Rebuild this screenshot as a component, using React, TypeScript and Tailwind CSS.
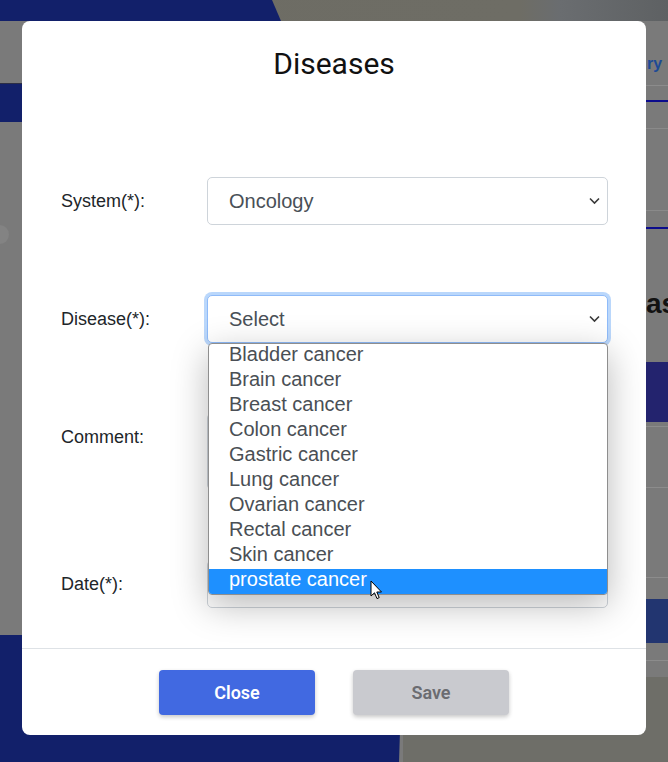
const diseases = [
  'Bladder cancer',
  'Brain cancer',
  'Breast cancer',
  'Colon cancer',
  'Gastric cancer',
  'Lung cancer',
  'Ovarian cancer',
  'Rectal cancer',
  'Skin cancer',
  'prostate cancer',
];

const Chevron = () => (
  <svg width="11" height="7" viewBox="0 0 11 7" className="absolute right-[7px] top-1/2 -translate-y-1/2">
    <path d="M1 1l4.5 4.5L10 1" fill="none" stroke="#3a3a3a" strokeWidth="1.6" />
  </svg>
);

const Cursor = () => (
  <svg width="14" height="21" viewBox="0 0 14 21" className="absolute left-[370px] top-[580px] z-30">
    <path
      d="M1 1 L1 16 L4.5 12.8 L7 18.6 L9.2 17.6 L6.8 12 L11.5 12 Z"
      fill="#fff"
      stroke="#000"
      strokeWidth="1"
      strokeLinejoin="round"
    />
  </svg>
);

const Background = () => (
  <div className="flex h-full flex-col">
    <div className="flex h-[21px] bg-[linear-gradient(90deg,#6d6c64_0,#6e6d65_520px,#6a6d70_560px,#5e6163_668px)]">
      <div className="w-[281px] bg-[#12206a] [clip-path:polygon(0_0,272px_0,281px_100%,0_100%)]" />
    </div>
    <div className="flex flex-1">
      {/* left strip */}
      <div className="flex w-[22px] flex-col">
        <div className="h-[62px] bg-[#7a7a7a]" />
        <div className="h-[1px] bg-[#2c2e45]" />
        <div className="h-[38px] bg-[#12206a]" />
        <div className="flex-1 bg-[#7a7a7a] pt-[103px]">
          <div className="ml-[-10px] h-[19px] w-[19px] rounded-full bg-[#838383]" />
        </div>
        <div className="h-[127px] bg-[#12206a]" />
      </div>
      {/* middle, under the modal */}
      <div className="flex flex-1 flex-col bg-[#7a7a7a]">
        <div className="flex-1" />
        <div className="flex h-[127px]">
          <div className="w-[381px] bg-[#12206a] [clip-path:polygon(0_0,100%_0,377px_100%,0_100%)]" />
          <div className="flex-1 bg-[#6e6e68]" />
        </div>
      </div>
      {/* right strip */}
      <div className="flex w-[22px] flex-col overflow-hidden bg-[#7a7a7a]">
        <div className="h-[33px]" />
        <div className="h-[19px] whitespace-nowrap pl-[1px] font-['Liberation_Sans'] text-[16px] font-bold leading-[19px] text-[#1d4a96]">
          ry
        </div>
        <div className="h-[12px]" />
        <div className="h-[1px] bg-[#8c8c8c]" />
        <div className="h-[14px]" />
        <div className="h-[2px] bg-[#0b0b8c]" />
        <div className="h-[26px]" />
        <div className="h-[1px] bg-[#8a8a8a]" />
        <div className="h-[81px]" />
        <div className="h-[1px] bg-[#8a8a8a]" />
        <div className="h-[16px]" />
        <div className="h-[2px] bg-[#0b0b8c]" />
        <div className="h-[58px]" />
        <div className="h-[34px] whitespace-nowrap font-['Liberation_Sans'] text-[28px] font-bold leading-[34px] text-[#121212]">
          as
        </div>
        <div className="h-[41px]" />
        <div className="h-[60px] bg-[#23236e]" />
        <div className="h-[4px]" />
        <div className="h-[1px] bg-[#8c8c8c]" />
        <div className="h-[60px]" />
        <div className="h-[1px] bg-[#8c8c8c]" />
        <div className="h-[89px]" />
        <div className="h-[1px] bg-[#8c8c8c]" />
        <div className="h-[21px]" />
        <div className="h-[44px] bg-[#223570]" />
        <div className="h-[17px]" />
        <div className="h-[1px] bg-[#8c8c8c]" />
        <div className="h-[16px]" />
        <div className="flex-1 bg-[#6e6e68]" />
      </div>
    </div>
  </div>
);

const Field = ({ children }: { children: React.ReactNode }) => (
  <div className="flex h-[48px] w-[146px] shrink-0 items-center text-[18px] text-[#212529]">{children}</div>
);

export default function App() {
  return (
    <div className="relative h-[762px] w-[668px] overflow-hidden font-['Liberation_Sans',sans-serif]">
      <Background />

      <div className="absolute left-[22px] top-[21px] flex h-[714px] w-[624px] flex-col rounded-[8px] bg-white">
        <div className="pt-[25px] text-center font-['Roboto',sans-serif] text-[30px] leading-[36px] text-[#111]">
          Diseases
        </div>

        <div className="mt-[95px] flex flex-col gap-[70px] pl-[39px]">
          <div className="flex items-start">
            <Field>System(*):</Field>
            <div className="relative h-[48px] w-[401px] rounded-[5px] border border-[#ced4da] bg-white">
              <div className="pl-[21px] text-[20px] leading-[46px] text-[#495057]">Oncology</div>
              <Chevron />
            </div>
          </div>

          <div className="flex items-start">
            <Field>Disease(*):</Field>
            <div className="relative h-[48px] w-[401px]">
              <div className="relative h-[48px] rounded-[5px] border border-[#8fbbf9] bg-white shadow-[0_0_0_3px_#bad7fb]">
                <div className="pl-[21px] text-[20px] leading-[46px] text-[#495057]">Select</div>
                <Chevron />
              </div>
              <ul className="absolute left-[1px] top-[48px] z-20 w-[400px] overflow-hidden rounded-[4px] border border-[#8e8e8e] bg-white shadow-[0_10px_36px_rgba(0,0,0,0.28)]">
                {diseases.map((d, i) => (
                  <li
                    key={d}
                    className={
                      i === diseases.length - 1
                        ? 'h-[25px] bg-[#1e90ff] pl-[20px] text-[20px] leading-[21px] text-white'
                        : 'h-[25px] pl-[20px] text-[20px] leading-[21px] text-[#4a4f55]'
                    }
                  >
                    {d}
                  </li>
                ))}
              </ul>
            </div>
          </div>

          <div className="flex items-start">
            <Field>Comment:</Field>
            <div className="h-[77px] w-[401px] rounded-[5px] border border-[#ced4da] bg-white" />
          </div>

          <div className="flex items-start">
            <Field>Date(*):</Field>
            <div className="h-[48px] w-[401px] rounded-[5px] border border-[#ced4da] bg-white">
              <div className="pl-[21px] text-[20px] leading-[46px] text-[#212529]">mm/dd/yyyy</div>
            </div>
          </div>
        </div>

        <div className="flex-1" />

        <div className="h-[87px] border-t border-[#dee2e6] pt-[21px]">
          <div className="flex justify-center gap-[38px] font-['Roboto',sans-serif]">
            <button className="h-[45px] w-[156px] rounded-[4px] bg-[#4169e1] text-[18px] font-semibold text-white shadow-[0_2px_4px_rgba(0,0,0,0.22)]">
              Close
            </button>
            <button className="h-[45px] w-[156px] rounded-[4px] bg-[#c9cacf] text-[18px] font-semibold text-[#6b6c71] shadow-[0_2px_4px_rgba(0,0,0,0.22)]">
              Save
            </button>
          </div>
        </div>
      </div>

      <Cursor />
    </div>
  );
}
